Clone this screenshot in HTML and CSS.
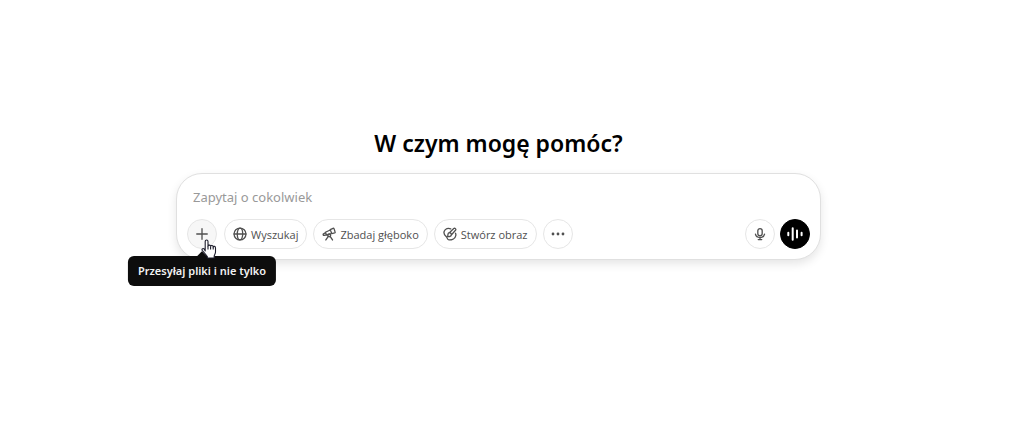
FILE: index.html
```html
<!DOCTYPE html>
<html lang="pl">
<head>
<meta charset="utf-8">
<meta name="viewport" content="width=device-width, initial-scale=1">
<title>Czat</title>
<link rel="stylesheet" href="styles.css">
</head>
<body>
<main class="page">
  <h1 class="title">W czym mogę pomóc?</h1>
  <form class="composer">
    <input class="prompt" type="text" placeholder="Zapytaj o cokolwiek" aria-label="Zapytaj o cokolwiek">
    <div class="toolbar">
      <div class="attach">
        <button class="btn round add" type="button" aria-label="Dodaj" aria-describedby="tip">
          <svg class="icon" viewBox="0 0 16 16"><path d="M8 2v12M2 8h12"/></svg>
        </button>
        <div class="tooltip" id="tip" role="tooltip">Przesyłaj pliki i nie tylko</div>
        <svg class="cursor" viewBox="0 0 16 20" aria-hidden="true">
          <path d="M4.200 12V2.600C4.200.5 7 .5 7 2.600V7c.2-1.300 2.500-1.200 2.600.300.4-1.200 2.500-1 2.600.6.5-1 2.300-.7 2.300 1V13c0 2-1.300 2.900-1.300 4.300V19H6.300v-1.500C5 15.800 3.500 14 1.400 11.600.3 10.200 1.900 8.800 3.200 10z"/>
          <path d="M7 7v3.500M9.600 7.500v3M12.200 8v2.500"/>
        </svg>
      </div>
      <button class="btn pill" type="button">
        <svg class="icon" viewBox="0 0 16 16"><circle cx="8" cy="8" r="6.800"/><ellipse cx="8" cy="8" rx="3.100" ry="6.800"/><path d="M1.200 8h13.600"/></svg>
        <span>Wyszukaj</span>
      </button>
      <button class="btn pill" type="button">
        <svg class="icon" viewBox="0 0 16 16"><path d="M9.400 3l3.200-1.500c.5-.2.900-.1 1.100.4l1.300 3.800c.2.500 0 .9-.5 1.100l-3.300.8zM9.500 3.400L3.800 6l1.400 3.200 6-1.900M4 6.600L1.700 7.800c-.9.600-.2 2.100.9 1.800l2.600-.7M7.200 10.600L4.400 14.800M9.300 10.600l2.700 4.200"/><circle cx="8.200" cy="9.500" r="1.700"/></svg>
        <span>Zbadaj głęboko</span>
      </button>
      <button class="btn pill" type="button">
        <svg class="icon" viewBox="0 0 16 16"><path d="M8.800 2.200C6 .8 2.600 2 1.400 4.900.3 8 2.200 10 4 11.300c1.100.8.5 3.300 2.700 3.400 2.900.2 7.300-.9 7.900-4.800.2-1 .1-1.900-.3-2.700"/><path d="M7.300 6.500l5-4.700c1.300-1.100 3.100.6 2 1.900L9.700 8.800M7.300 6.500c1.300.2 2.200 1 2.400 2.300-.4 2.100-2.400 2.500-4.700 2 1-.7.5-1.700.7-2.600.2-1 .8-1.600 1.600-1.700z"/></svg>
        <span>Stwórz obraz</span>
      </button>
      <button class="btn round" type="button" aria-label="Więcej">
        <svg class="icon solid" viewBox="0 0 16 16"><circle cx="2.300" cy="8" r="1.600"/><circle cx="8" cy="8" r="1.600"/><circle cx="13.700" cy="8" r="1.600"/></svg>
      </button>
      <div class="voice-group">
        <button class="btn round" type="button" aria-label="Dyktuj">
          <svg class="icon" viewBox="0 0 16 16"><rect x="5.500" y="1.800" width="5" height="8.200" rx="2.500"/><path d="M2.800 8.200c.5 2.500 2.500 3.800 5.200 3.800s4.700-1.300 5.200-3.800M8 12v2M6 14.400h4"/></svg>
        </button>
        <button class="btn round voice" type="button" aria-label="Tryb głosowy">
          <svg class="wave" viewBox="0 0 16 16"><path d="M1.300 6.700v2.600M5.700 2.200v11.600M10 4.500v7M14.600 6.700v2.600"/></svg>
        </button>
      </div>
    </div>
  </form>
</main>
</body>
</html>
```
FILE: styles.css
```css
* {
  box-sizing: border-box;
}

body {
  margin: 0;
  background: #fff;
  color: #0d0d0d;
  font-family: "Noto Sans", "Open Sans", sans-serif;
}

.page {
  display: flex;
  flex-direction: column;
  align-items: center;
  gap: 14px;
  padding: 127px 43px 32px 16px;
}

.title {
  margin: 0;
  color: #000;
  font-size: 23px;
  font-weight: 600;
  line-height: 32px;
}

.composer {
  width: 100%;
  max-width: 645px;
  padding: 10px;
  border: 1px solid #e0e0e0;
  border-radius: 26px;
  background: #fff;
  box-shadow: 0 4px 10px rgba(0, 0, 0, 0.1);
}

.prompt {
  display: block;
  width: 100%;
  height: 26px;
  margin-bottom: 9px;
  padding: 0 6px;
  border: 0;
  outline: 0;
  background: transparent;
  color: inherit;
  font: 13px "Noto Sans", "Open Sans", sans-serif;
}

.prompt::placeholder {
  color: #999;
  opacity: 1;
}

.toolbar {
  display: flex;
  align-items: center;
  gap: 6px;
}

.btn {
  display: flex;
  align-items: center;
  justify-content: center;
  gap: 4px;
  height: 30px;
  padding: 0;
  border: 1px solid #e6e6e6;
  border-radius: 15px;
  background: #fff;
  color: #505050;
  font: 500 11px "Open Sans", "Noto Sans", sans-serif;
  white-space: nowrap;
  cursor: pointer;
}

.round {
  width: 30px;
}

.pill {
  padding: 0 8px;
}

.add {
  background: #f7f7f7;
}

.icon {
  width: 14px;
  height: 14px;
  fill: none;
  stroke: currentColor;
  stroke-width: 1.5;
  stroke-linecap: round;
  stroke-linejoin: round;
}

.solid {
  fill: currentColor;
  stroke: none;
}

.attach {
  position: relative;
  margin-right: 1px;
}

.tooltip {
  position: absolute;
  top: 37px;
  left: 50%;
  transform: translateX(-50%);
  padding: 0 10px;
  border-radius: 6px;
  background: #0d0d0d;
  color: #f3f3f3;
  font-size: 11px;
  font-weight: 600;
  line-height: 30px;
  white-space: nowrap;
}

.tooltip::before {
  content: "";
  position: absolute;
  top: -3px;
  left: 50%;
  width: 8px;
  height: 8px;
  margin-left: -4px;
  background: #0d0d0d;
  transform: rotate(45deg);
}

.cursor {
  position: absolute;
  top: 20px;
  left: 14px;
  width: 16px;
  height: 20px;
  fill: #fff;
  stroke: #1c1c2b;
  stroke-width: 1.1;
  stroke-linejoin: round;
  pointer-events: none;
}

.voice-group {
  display: flex;
  gap: 5px;
  margin-left: auto;
}

.voice {
  border-color: #000;
  background: #000;
  color: #fff;
}

.wave {
  width: 16px;
  height: 16px;
  fill: none;
  stroke: currentColor;
  stroke-width: 2;
  stroke-linecap: round;
}
```
